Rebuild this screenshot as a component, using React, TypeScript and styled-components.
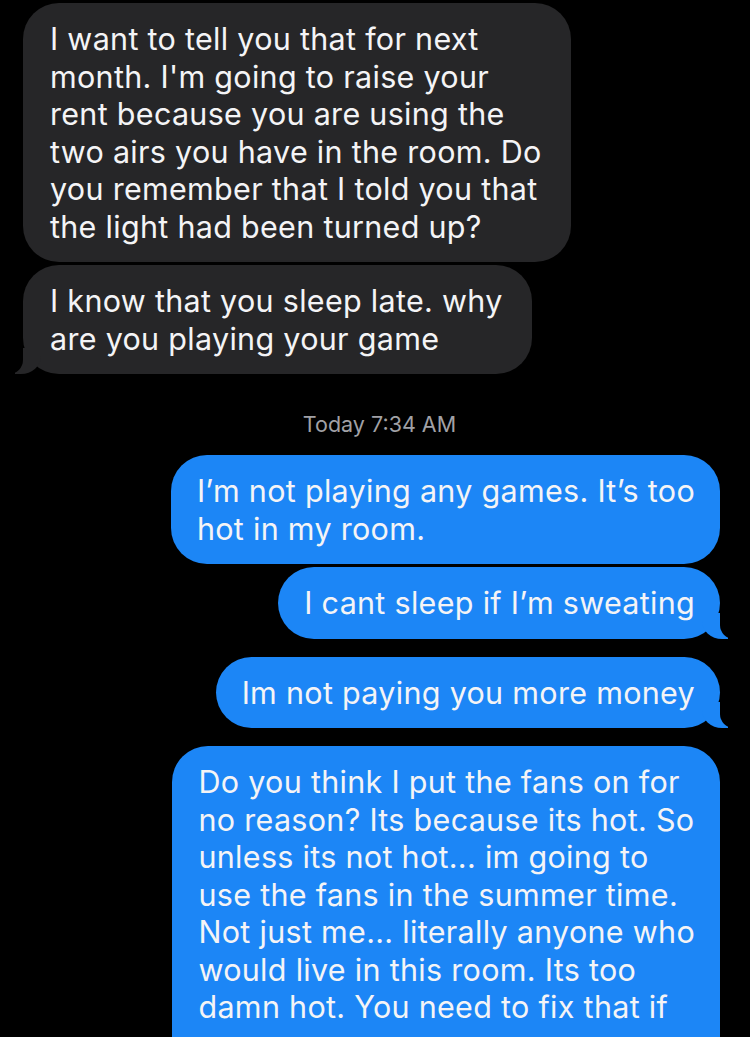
import React from 'react'
import styled, { createGlobalStyle, css } from 'styled-components'

const GlobalStyle = createGlobalStyle`
  html, body {
    margin: 0;
    padding: 0;
    background: #000;
    height: 1037px;
    overflow: hidden;
  }
  body {
    font-family: Inter, "Noto Sans", "Liberation Sans", sans-serif;
    -webkit-font-smoothing: antialiased;
  }
`;

const Thread = styled.div`
  display: flex;
  flex-direction: column;
  padding: 3px 30px 0 23px;
`;

const Group = styled.div<{ $mine?: boolean }>`
  display: flex;
  flex-direction: column;
  align-items: ${p => (p.$mine ? 'flex-end' : 'flex-start')};
  gap: 3px;
  margin-bottom: 18px;
`;

const Bubble = styled.div<{ $mine?: boolean; $tail?: boolean }>`
  position: relative;
  box-sizing: border-box;
  padding: ${p => (p.$mine ? '17px 25px 17px 26px' : '17px 29px 17px 27px')};
  border-radius: 36px;
  font-size: 30.5px;
  letter-spacing: 0.3px;
  line-height: 37.5px;
  color: #f4f4f6;
  white-space: nowrap;
  background: ${p => (p.$mine ? '#1c86f6' : '#262628')};

  ${p =>
    p.$tail &&
    (p.$mine
      ? css`
          &::before {
            content: '';
            position: absolute;
            bottom: 0;
            right: -8px;
            width: 26px;
            height: 26px;
            background: #1c86f6;
            border-bottom-left-radius: 20px 18px;
          }
          &::after {
            content: '';
            position: absolute;
            bottom: 0;
            right: -30px;
            width: 30px;
            height: 28px;
            background: #000;
            border-bottom-left-radius: 14px;
          }
        `
      : css`
          &::before {
            content: '';
            position: absolute;
            bottom: 0;
            left: -8px;
            width: 26px;
            height: 26px;
            background: #262628;
            border-bottom-right-radius: 20px 18px;
          }
          &::after {
            content: '';
            position: absolute;
            bottom: 0;
            left: -30px;
            width: 30px;
            height: 28px;
            background: #000;
            border-bottom-right-radius: 14px;
          }
        `)}
`;

const LongBubble = styled(Bubble)`
  padding-bottom: 60px;
`;

const Stamp = styled.div`
  align-self: center;
  margin: 20px 0 19px 0;
  padding-left: 16px;
  font-size: 21.5px;
  line-height: 24px;
  color: #a1a1a6;
`;

export default function App() {
  return (
    <>
      <GlobalStyle />
      <Thread>
        <Group>
          <Bubble>
            I want to tell you that for next<br />
            month. I'm going to raise your<br />
            rent because you are using the<br />
            two airs you have in the room. Do<br />
            you remember that I told you that<br />
            the light had been turned up?
          </Bubble>
          <Bubble $tail>
            I know that you sleep late. why<br />
            are you playing your game
          </Bubble>
        </Group>
        <Stamp>Today 7:34 AM</Stamp>
        <Group $mine>
          <Bubble $mine>
            I’m not playing any games. It’s too<br />
            hot in my room.
          </Bubble>
          <Bubble $mine $tail>I cant sleep if I’m sweating</Bubble>
        </Group>
        <Group $mine>
          <Bubble $mine $tail>Im not paying you more money</Bubble>
        </Group>
        <Group $mine>
          <LongBubble $mine>
            Do you think I put the fans on for<br />
            no reason? Its because its hot. So<br />
            unless its not hot... im going to<br />
            use the fans in the summer time.<br />
            Not just me... literally anyone who<br />
            would live in this room. Its too<br />
            damn hot. You need to fix that if
          </LongBubble>
        </Group>
      </Thread>
    </>
  )
}
